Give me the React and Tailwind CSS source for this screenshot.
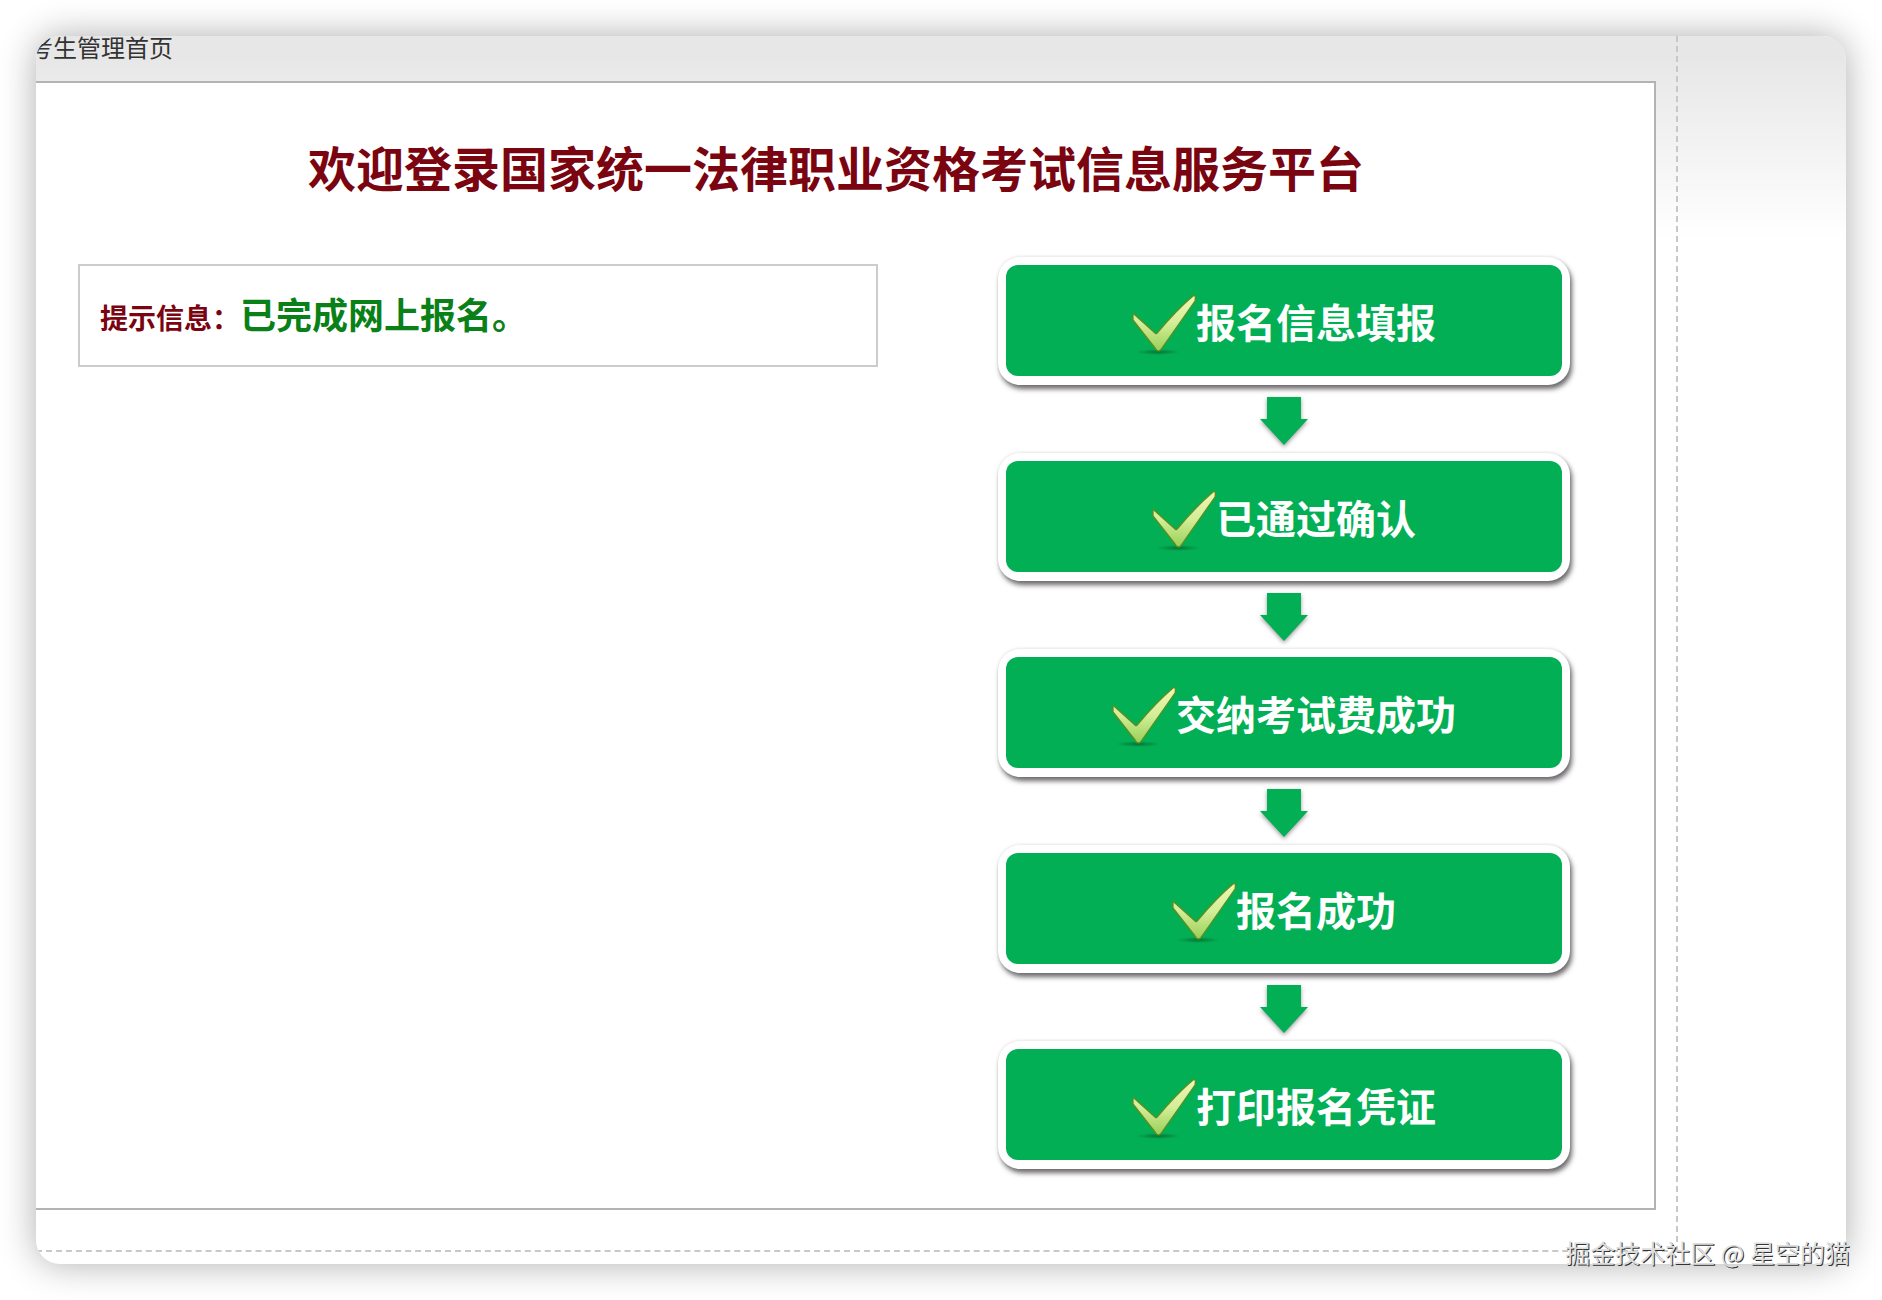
const steps = ['报名信息填报', '已通过确认', '交纳考试费成功', '报名成功', '打印报名凭证'];

const CheckIcon = () => (
  <svg width="64" height="70" viewBox="0 0 64 70" className="shrink-0" aria-hidden="true">
    <defs>
      <linearGradient id="tick" x1="0" y1="0" x2="0" y2="1">
        <stop offset="0" stopColor="#eef8b4" />
        <stop offset="0.5" stopColor="#d3ee98" />
        <stop offset="1" stopColor="#98cf58" />
      </linearGradient>
      <radialGradient id="tickShadow">
        <stop offset="0" stopColor="#044d20" stopOpacity="0.6" />
        <stop offset="1" stopColor="#044d20" stopOpacity="0" />
      </radialGradient>
    </defs>
    <ellipse cx="26" cy="66" rx="22" ry="3" fill="url(#tickShadow)" />
    <path
      d="M1 29 C1 27 2 28 3 29 L23 47 C24 48 25 48 26 46 C37 33 48 21 61 10 C63 9 64 10 63 15 L30 62 C28 66 25 66 23 62 L1 34 Z"
      fill="url(#tick)"
      stroke="#5f8c1e"
      strokeWidth="1.3"
      strokeLinejoin="round"
    />
  </svg>
);

const DownArrow = () => (
  <svg width="52" height="56" viewBox="0 0 52 56" className="mt-2 mb-1 drop-shadow-[0_2px_2px_rgba(60,60,60,0.5)]" aria-hidden="true">
    <path d="M9 4 H43 V26 H50 L26 52 L2 26 H9 Z" fill="#02af55" />
  </svg>
);

const Step = ({ label }) => (
  <div className="w-full rounded-[22px] bg-white px-2 pt-2 pb-[9px] shadow-[0_-1px_3px_rgba(0,0,0,0.08),2px_4px_5px_rgba(60,55,60,0.75)]">
    <div className="flex h-[111px] items-center justify-center rounded-[12px] bg-[#02af55]">
      <CheckIcon />
      <span className="text-[40px] leading-[48px] font-bold text-white">{label}</span>
    </div>
  </div>
);

const App = () => {
  return (
    <div className="relative bg-white p-9 font-['Noto_Sans_CJK_SC',sans-serif]">
      <div className="flex overflow-hidden rounded-[24px] bg-linear-to-b from-[#e7e7e7] from-10% to-white bg-[length:100%_204px] bg-no-repeat pb-3 shadow-[0_0_36px_rgba(0,0,0,0.32)]">
        <div className="min-w-0 flex-1 border-r-2 border-b-2 border-dashed border-[#c8c8c8] pb-10">
          <nav className="-ml-[7px] h-[45px] text-[24px] leading-[22px] text-[#333]">考生管理首页</nav>

          <main className="mr-5 border-y-2 border-r-2 border-[#b3b3b3] bg-white pr-[18px] pb-[39px]">
            <h1 className="pt-[50px] text-center text-[48px] leading-[66px] font-bold text-[#7a0410]">
              欢迎登录国家统一法律职业资格考试信息服务平台
            </h1>

            <div className="mt-[56px] flex items-start">
              <div className="min-w-0 flex-1 pr-[54px] pl-[42px] pt-[9px]">
                <p className="flex h-[103px] items-baseline border-2 border-[#ccc] px-5 pt-[22px] leading-[50px] font-bold">
                  <span className="text-[28px] text-[#7a0410]">提示信息：</span>
                  <span className="text-[36px] text-[#0a8018]">已完成网上报名。</span>
                </p>
              </div>

              <ol className="flex w-[704px] flex-col items-center px-[66px] pt-[2px]">
                {steps.map((label, i) => (
                  <li key={label} className="flex w-full flex-col items-center">
                    {i > 0 && <DownArrow />}
                    <Step label={label} />
                  </li>
                ))}
              </ol>
            </div>
          </main>
        </div>
        <aside className="w-[168px] shrink-0" />
      </div>

      <p className="absolute right-8 bottom-8 text-[25px] leading-[32px] text-[#dedede] [text-shadow:1px_1px_0_#333]">
        掘金技术社区 @ 星空的猫
      </p>
    </div>
  );
};

export default App;
